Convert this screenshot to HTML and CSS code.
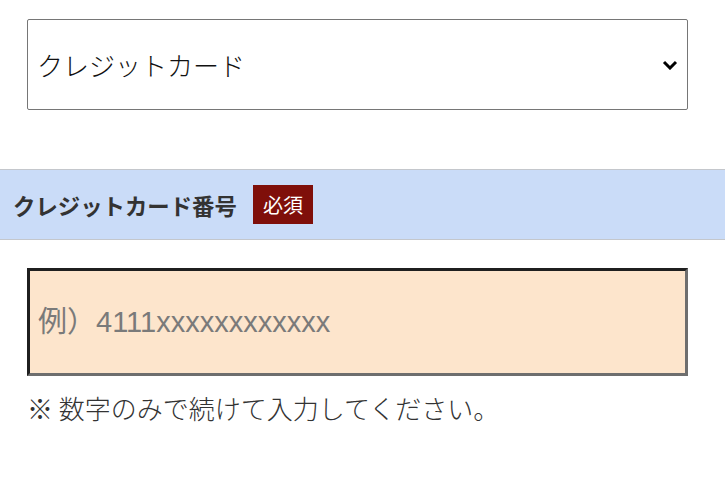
FILE: index.html
```html
<!DOCTYPE html>
<html lang="ja">
<head>
  <meta charset="UTF-8" />
  <title>お支払い方法</title>
  <link rel="stylesheet" href="styles.css">
</head>
<body>
  <div class="method">
    <div class="select-wrap">
      <select class="method-select">
        <option>クレジットカード</option>
        <option>銀行振込</option>
        <option>代金引換</option>
      </select>
      <svg class="chevron" width="16" height="10" viewBox="0 0 16 10">
        <path d="M2 2 L8 8 L14 2" fill="none" stroke="#000" stroke-width="3"/>
      </svg>
    </div>
  </div>

  <div class="field-head">
    <span class="field-label">クレジットカード番号</span>
    <span class="required">必須</span>
  </div>

  <div class="field-body">
    <input type="text" class="card-input" placeholder="例）4111xxxxxxxxxxxx">
    <p class="hint">※ 数字のみで続けて入力してください。</p>
  </div>
</body>
</html>
```

FILE: styles.css
```css
body {
  font-family: "Noto Sans CJK JP", "Liberation Sans", sans-serif;
  background-color: #fff;
  color: #333;
  margin: 0;
  padding: 0;
}
.method {
  padding: 19px 37px 0 27px;
}
.select-wrap {
  position: relative;
}
.method-select {
  appearance: none;
  -webkit-appearance: none;
  width: 100%;
  height: 91px;
  box-sizing: border-box;
  border: 1px solid #767676;
  border-radius: 2px;
  background: #fff;
  padding: 0 40px 0 9px;
  font-family: inherit;
  font-size: 26px;
  font-weight: 300;
  color: #111;
}
.chevron {
  position: absolute;
  right: 10px;
  top: 41px;
}
.field-head {
  margin-top: 59px;
  height: 69px;
  background-color: #cadcf8;
  border-top: 1px solid #c4c7cc;
  border-bottom: 1px solid #c4c7cc;
  display: flex;
  align-items: center;
  gap: 16px;
  padding-left: 13px;
}
.field-label {
  font-size: 22.4px;
  font-weight: bold;
  color: #333;
}
.required {
  background-color: #7f0f0a;
  color: #fff;
  font-size: 20px;
  width: 60px;
  height: 39px;
  display: flex;
  align-items: center;
  justify-content: center;
}
.field-body {
  padding: 28px 37px 0 27px;
}
.card-input {
  width: 100%;
  height: 108px;
  box-sizing: border-box;
  background-color: #fde5cc;
  border-style: solid;
  border-width: 3px;
  border-color: #1f1f1f #6e6e6e #6e6e6e #1f1f1f;
  padding: 0 8px;
  font-family: "Liberation Sans", "Noto Sans CJK JP", sans-serif;
  font-size: 29px;
  color: #333;
}
.card-input::placeholder {
  color: #7a7a7a;
}
.hint {
  margin: 13px 0 0;
  font-size: 26px;
  font-weight: 300;
  color: #333;
}
```
